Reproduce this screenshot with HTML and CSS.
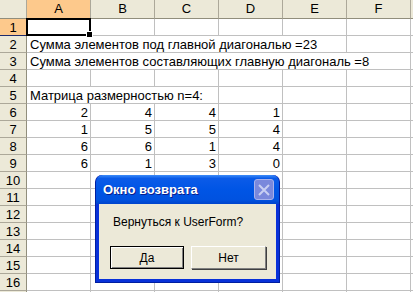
FILE: index.html
```html
<!DOCTYPE html>
<html lang="ru">
<head>
    <meta charset="UTF-8">
    <title>Excel - матрица</title>
    <link rel="stylesheet" href="styles.css">
</head>
<body>
    <div class="sheet" id="sheet"></div>

    <div class="dialog">
        <div class="dialog-title">
            <span>Окно возврата</span>
            <span class="close-btn">
                <svg width="12" height="12" viewBox="0 0 12 12">
                    <path d="M1 1 L11 11 M11 1 L1 11" stroke="#c9cff2" stroke-width="2" fill="none"/>
                </svg>
            </span>
        </div>
        <div class="dialog-body">
            <p class="dialog-text">Вернуться к UserForm?</p>
            <div class="dialog-buttons">
                <button class="btn btn-default">Да</button>
                <button class="btn">Нет</button>
            </div>
        </div>
    </div>

    <script>
        const sheet = document.getElementById('sheet');
        const cols = ['A', 'B', 'C', 'D', 'E', 'F', ''];
        const wide = {
            2: { span: 5, text: 'Сумма элементов под главной диагональю =23' },
            3: { span: 6, text: 'Сумма элементов составляющих главную диагональ =8' },
            5: { span: 3, text: 'Матрица размерностью n=4:' }
        };
        const matrix = [[2, 4, 4, 1], [1, 5, 5, 4], [6, 6, 1, 4], [6, 1, 3, 0]];

        const cell = (cls, text, span) => {
            const el = document.createElement('div');
            el.className = cls;
            if (text !== undefined) el.textContent = text;
            if (span) el.style.gridColumn = 'span ' + span;
            sheet.appendChild(el);
            return el;
        };

        cell('head corner');
        cols.forEach((c, i) => cell(i === 0 ? 'head col-head active-col' : 'head col-head', c));

        for (let r = 1; r <= 17; r++) {
            cell(r === 1 ? 'head row-head active-row' : 'head row-head', r < 17 ? r : '');
            let c = 0;
            if (wide[r]) {
                cell('cell text', wide[r].text, wide[r].span);
                c = wide[r].span;
            }
            for (; c < cols.length; c++) {
                const m = matrix[r - 6];
                if (m && c < 4) {
                    cell('cell num', m[c]);
                } else {
                    const el = cell('cell');
                    if (r === 1 && c === 0) el.classList.add('selected');
                }
            }
        }
    </script>
</body>
</html>
```

FILE: styles.css
```css
/* Sheet */
body {
    margin: 0;
    width: 413px;
    height: 292px;
    overflow: hidden;
    background: #fff;
    font-family: 'Liberation Sans', Arial, sans-serif;
    position: relative;
}

.sheet {
    width: 413px;
    height: 292px;
    overflow: hidden;
    display: grid;
    grid-template-columns: 27px repeat(6, 64px) 64px;
    grid-template-rows: 19px repeat(17, 17px);
    font-size: 13px;
    color: #000;
}

.cell {
    box-sizing: border-box;
    border-right: 1px solid #c0c0c0;
    border-bottom: 1px solid #c0c0c0;
    line-height: 17px;
    white-space: nowrap;
    overflow: hidden;
}

.cell.text {
    padding-left: 3px;
}

.cell.num {
    text-align: right;
    padding-right: 2px;
}

.cell.selected {
    position: relative;
    overflow: visible;
}

.cell.selected::after {
    content: '';
    position: absolute;
    left: -1px;
    top: -1px;
    right: -1px;
    bottom: -1px;
    border: 2px solid #000;
}

.cell.selected::before {
    content: '';
    position: absolute;
    right: -3px;
    bottom: -3px;
    width: 5px;
    height: 5px;
    background: #000;
    border: 1px solid #fff;
    z-index: 1;
}

.head {
    box-sizing: border-box;
    background: #ece9d8;
    border-right: 1px solid #aca899;
    border-bottom: 1px solid #aca899;
    text-align: center;
    line-height: 17px;
}

.col-head {
    line-height: 18px;
    border-bottom-color: #918e7c;
}

.corner {
    border-bottom-color: #918e7c;
}

.row-head {
    border-right-color: #918e7c;
}

.active-col {
    background: #fdc98c;
    border-bottom: 1px solid #1d2a6c;
}

.active-row {
    background: #fdc98c;
    border-bottom-color: #1d2a6c;
}

/* Dialog window */
.dialog {
    position: absolute;
    left: 95px;
    top: 175px;
    width: 185px;
    height: 108px;
    box-sizing: border-box;
    display: flex;
    flex-direction: column;
    background: #0831d9;
    border: 1px solid #001ea0;
    border-top: none;
    border-radius: 7px 7px 0 0;
    padding: 0 3px 3px 3px;
}

.dialog-title {
    height: 29px;
    margin: 0 -3px;
    padding: 0 5px 0 7px;
    display: flex;
    align-items: center;
    justify-content: space-between;
    border-radius: 7px 7px 0 0;
    background: linear-gradient(#3d8cf8 0%, #0b5be8 12%, #0055e5 50%, #0052e0 85%, #0044cc 100%);
    color: #fff;
    font-weight: bold;
    font-size: 13px;
    text-shadow: 1px 1px 0 #0a1e8c;
}

.close-btn {
    width: 20px;
    height: 21px;
    box-sizing: border-box;
    display: flex;
    align-items: center;
    justify-content: center;
    background: #7a88dc;
    border: 1px solid #a9b2ec;
    border-radius: 3px;
}

.dialog-body {
    flex: 1;
    background: #ece9d8;
    padding: 0 0 0 11px;
}

.dialog-text {
    margin: 11px 0 0 3px;
    font-size: 12px;
    line-height: 14px;
}

.dialog-buttons {
    display: flex;
    gap: 7px;
    margin-top: 17px;
}

.btn {
    width: 75px;
    height: 23px;
    box-sizing: border-box;
    background: #ece9d8;
    border: 1px solid;
    border-color: #fff #808080 #808080 #fff;
    box-shadow: 1px 1px 0 #404040;
    font-family: 'Liberation Sans', Arial, sans-serif;
    font-size: 12px;
    padding: 0;
    color: #000;
}

.btn-default {
    width: 74px;
    border: 1px solid #000;
    box-shadow: inset 1px 1px 0 #fff, inset -1px -1px 0 #808080;
}
```
